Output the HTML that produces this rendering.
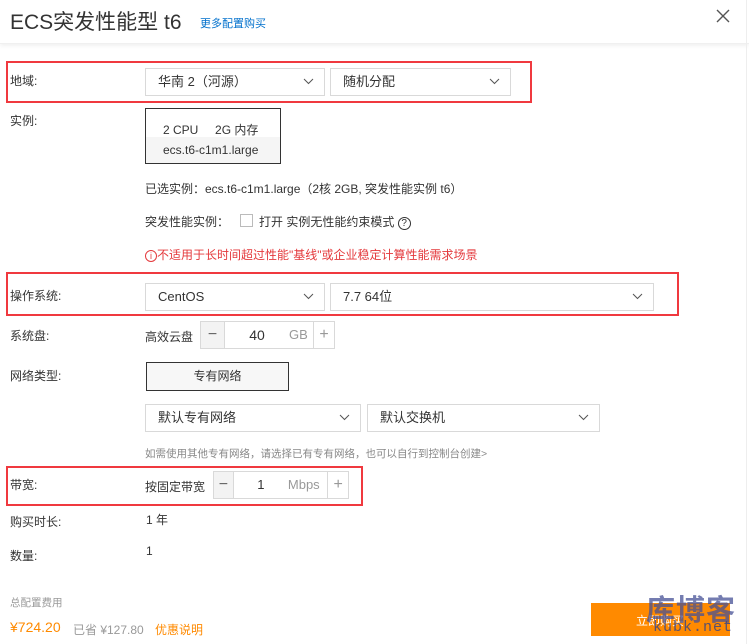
<!DOCTYPE html>
<html><head><meta charset="utf-8"><style>
*{margin:0;padding:0;box-sizing:border-box}
body{width:749px;height:644px;background:#fff;position:relative;overflow:hidden;font-family:"Liberation Sans","Noto Sans CJK SC",sans-serif;font-size:12px;color:#333}
.a{position:absolute;white-space:nowrap}
.lbl{position:absolute;left:10px;font-size:12px;color:#333;line-height:14px}
.sel{position:absolute;border:1px solid #d9d9d9;background:#fff;height:28px;line-height:26px;padding-left:12px;font-size:13px;color:#333}
.sel svg{position:absolute;right:10px;top:9px}
.red{position:absolute;border:2px solid #f0393f}
.step{position:absolute;border:1px solid #d9d9d9;height:28px;display:flex;font-size:13px}
.step .b{background:#f3f3f3;color:#666;text-align:center;line-height:26px;font-size:16px}
.step .p{color:#999;text-align:center;line-height:26px;font-size:16px;border-left:1px solid #d9d9d9}
</style></head><body>
<div class="a" style="left:0;top:0;width:749px;height:44px;box-shadow:0 2px 4px rgba(0,0,0,.06);border-bottom:1px solid #f0f0f0"></div>
<div class="a" style="left:10px;top:6px;font-size:21px;color:#333">ECS突发性能型 t6</div>
<div class="a" style="left:200px;top:15px;font-size:11px;color:#0070cc">更多配置购买</div>
<svg class="a" style="left:716px;top:9px" width="14" height="14"><path d="M1 1L13 13M13 1L1 13" stroke="#555" stroke-width="1.4"/></svg>
<div class="a" style="left:746px;top:0;width:1px;height:644px;background:#eee"></div>

<div class="red" style="left:6px;top:61px;width:526px;height:42px"></div>
<div class="lbl" style="top:74px">地域:</div>
<div class="sel" style="left:145px;top:68px;width:180px">华南 2（河源）<svg width="11" height="7"><path d="M1 1L5.5 5.5L10 1" stroke="#555" fill="none"/></svg></div>
<div class="sel" style="left:330px;top:68px;width:181px">随机分配<svg width="11" height="7"><path d="M1 1L5.5 5.5L10 1" stroke="#555" fill="none"/></svg></div>

<div class="lbl" style="top:114px">实例:</div>
<div class="a" style="left:145px;top:108px;width:136px;height:56px;border:1px solid #333;background:#f5f5f5">
<div style="background:#fff;height:28px;padding:12px 0 0 17px;font-size:12px">2 CPU&nbsp;&nbsp;&nbsp;&nbsp; 2G 内存</div>
<div style="padding:6px 0 0 17px;font-size:12px">ecs.t6-c1m1.large</div></div>

<div class="a" style="left:145px;top:180px;font-size:12px">已选实例：ecs.t6-c1m1.large（2核 2GB, 突发性能实例 t6）</div>
<div class="a" style="left:145px;top:213px;font-size:12px">突发性能实例：</div>
<div class="a" style="left:240px;top:214px;width:13px;height:13px;border:1px solid #bbb"></div>
<div class="a" style="left:259px;top:213px;font-size:12px">打开 实例无性能约束模式 <span style="display:inline-block;width:13px;height:13px;border:1px solid #333;border-radius:50%;font-size:10px;line-height:11px;text-align:center">?</span></div>
<div class="a" style="left:145px;top:246px;font-size:12px;color:#e4393c"><span style="display:inline-block;width:12px;height:12px;border:1px solid #e4393c;border-radius:50%;font-size:9px;line-height:10px;text-align:center">i</span>不适用于长时间超过性能"基线"或企业稳定计算性能需求场景</div>

<div class="red" style="left:6px;top:272px;width:673px;height:44px"></div>
<div class="lbl" style="top:289px">操作系统:</div>
<div class="sel" style="left:145px;top:283px;width:180px">CentOS<svg width="11" height="7"><path d="M1 1L5.5 5.5L10 1" stroke="#555" fill="none"/></svg></div>
<div class="sel" style="left:330px;top:283px;width:324px">7.7 64位<svg width="11" height="7"><path d="M1 1L5.5 5.5L10 1" stroke="#555" fill="none"/></svg></div>

<div class="lbl" style="top:329px">系统盘:</div>
<div class="a" style="left:145px;top:328px;font-size:12px">高效云盘</div>
<div class="step" style="left:200px;top:321px;width:135px">
<div class="b" style="width:24px;border-right:1px solid #d9d9d9">−</div>
<div style="width:64px;text-align:center;line-height:26px;font-size:14px;color:#333">40</div>
<div style="width:24px;color:#999;line-height:26px">GB</div>
<div class="p" style="width:21px">+</div></div>

<div class="lbl" style="top:369px">网络类型:</div>
<div class="a" style="left:146px;top:362px;width:143px;height:29px;border:1px solid #333;background:#f7f7f7;text-align:center;line-height:27px;font-size:12px">专有网络</div>

<div class="sel" style="left:145px;top:404px;width:216px">默认专有网络<svg width="11" height="7"><path d="M1 1L5.5 5.5L10 1" stroke="#555" fill="none"/></svg></div>
<div class="sel" style="left:367px;top:404px;width:233px">默认交换机<svg width="11" height="7"><path d="M1 1L5.5 5.5L10 1" stroke="#555" fill="none"/></svg></div>
<div class="a" style="left:145px;top:446px;font-size:10.5px;color:#888">如需使用其他专有网络，请选择已有专有网络，也可以自行到控制台创建&gt;</div>

<div class="red" style="left:6px;top:466px;width:357px;height:40px"></div>
<div class="lbl" style="top:478px">带宽:</div>
<div class="a" style="left:145px;top:478px;font-size:12px">按固定带宽</div>
<div class="step" style="left:213px;top:471px;width:136px">
<div class="b" style="width:20px;border-right:1px solid #d9d9d9">−</div>
<div style="width:55px;text-align:center;line-height:26px;font-size:13px;color:#333">1</div>
<div style="width:40px;color:#999;line-height:26px">Mbps</div>
<div class="p" style="width:21px">+</div></div>

<div class="lbl" style="top:515px">购买时长:</div>
<div class="a" style="left:146px;top:511px;font-size:12px">1 年</div>
<div class="lbl" style="top:549px">数量:</div>
<div class="a" style="left:146px;top:544px;font-size:12px">1</div>

<div class="a" style="left:10px;top:595px;font-size:10.5px;color:#999">总配置费用</div>
<div class="a" style="left:10px;top:619px;font-size:14px;color:#ff8a00">¥724.20</div>
<div class="a" style="left:73px;top:621px;font-size:12px;color:#999">已省 ¥127.80</div>
<div class="a" style="left:155px;top:621px;font-size:12px;color:#ff8a00">优惠说明</div>
<div class="a" style="left:591px;top:603px;width:139px;height:33px;background:#ff8a00"></div>
<div class="a" style="left:636px;top:612px;font-size:12px;color:#fff">立即购买</div>
<div class="a" style="left:646px;top:587px;font-size:29px;font-weight:bold;color:rgba(70,80,150,.75);letter-spacing:1px">库博客</div>
<div class="a" style="left:653px;top:619px;font-family:'Liberation Mono',monospace;font-size:15px;color:rgba(60,70,130,.85);letter-spacing:1px">kubk.net</div>
</body></html>
